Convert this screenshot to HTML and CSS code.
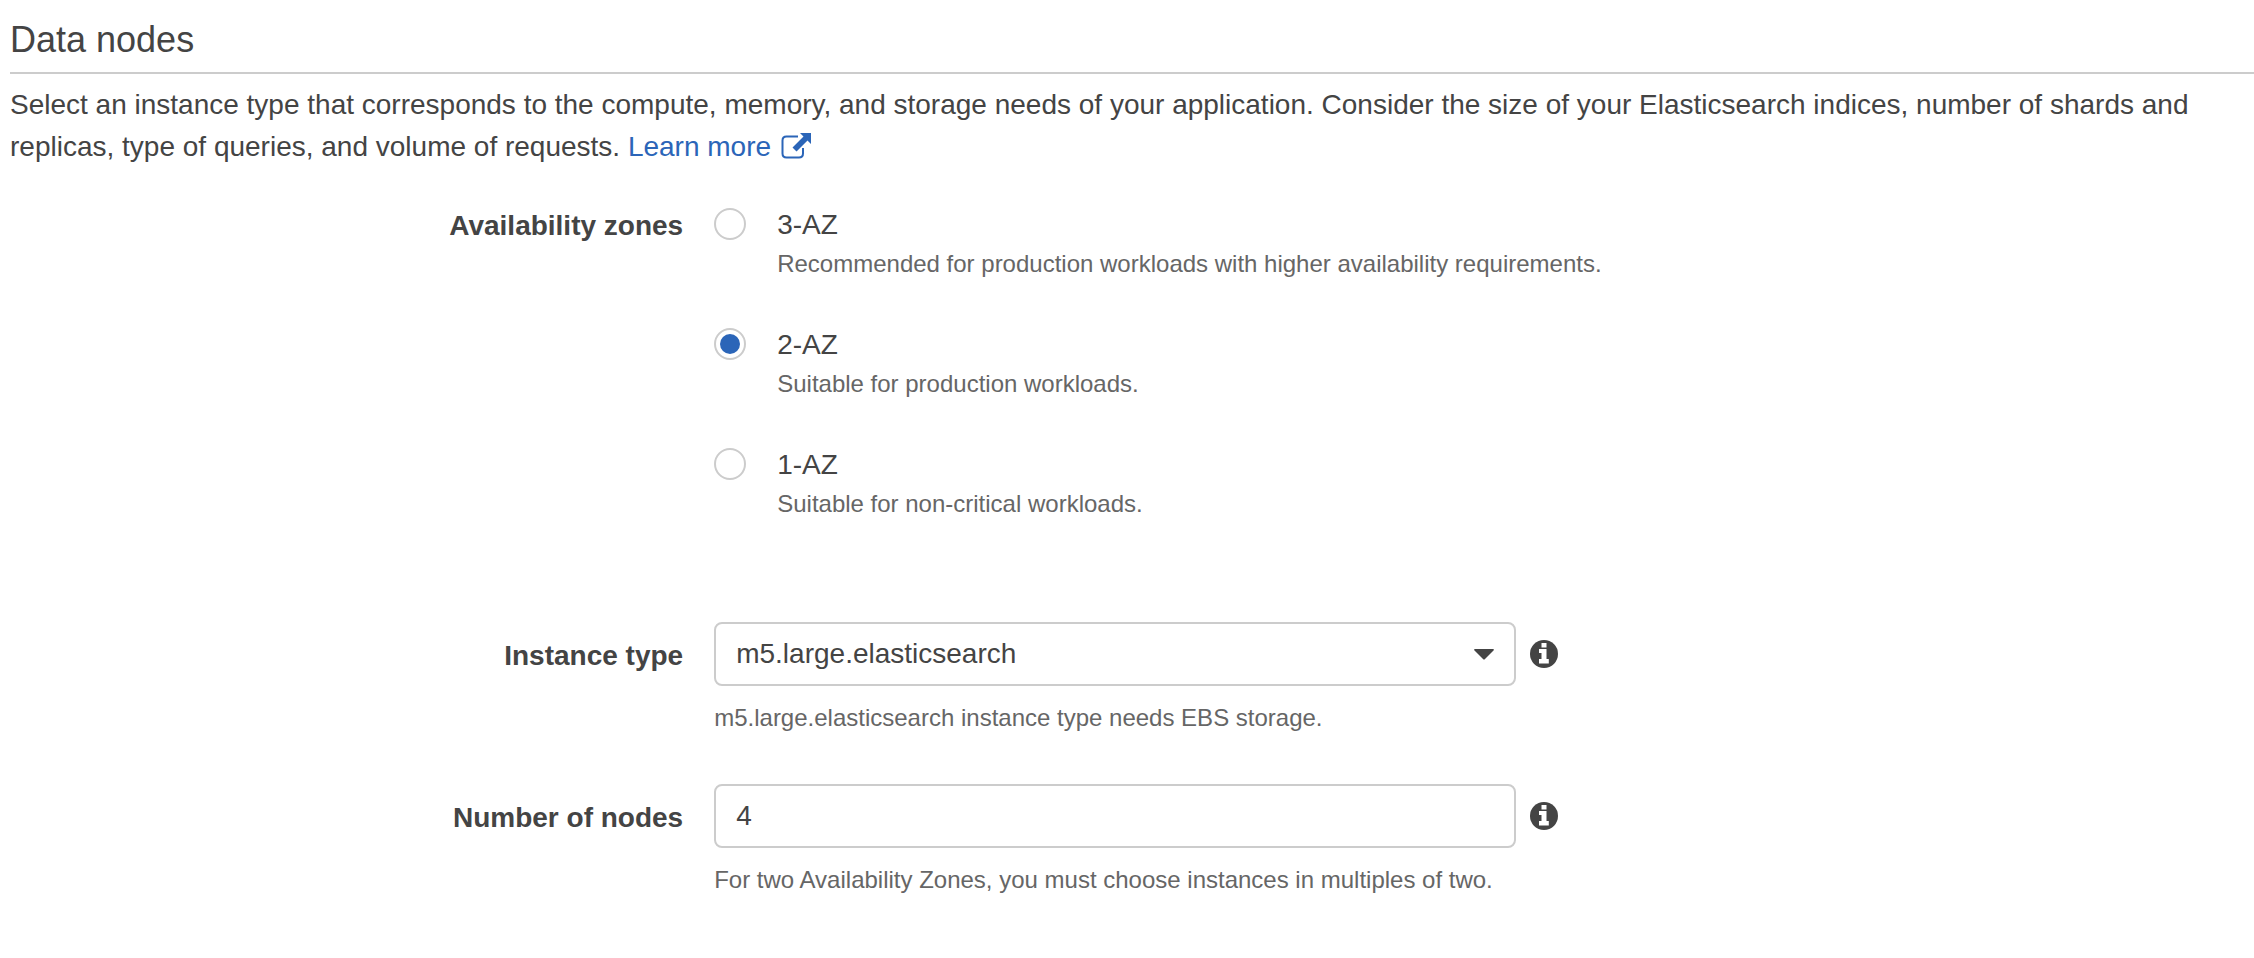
FILE: index.html
```html
<!DOCTYPE html>
<html lang="en">
<head>
<meta charset="utf-8">
<meta name="viewport" content="width=device-width, initial-scale=1">
<title>Data nodes</title>
<link rel="stylesheet" href="styles.css">
</head>
<body>
<main class="panel">
  <h2 class="panel-title">Data nodes</h2>
  <p class="intro">Select an instance type that corresponds to the compute, memory, and storage needs of your application. Consider the size of your Elasticsearch indices, number of shards and replicas, type of queries, and volume of requests. <a class="link" href="#">Learn more <svg class="external-icon" viewBox="0 0 30 26" aria-hidden="true"><path d="M17 3.500H5.500Q1.500 3.500 1.500 7.500V20.500Q1.500 24.500 5.500 24.500H18Q22 24.500 22 20.500V15" fill="none" stroke="currentColor" stroke-width="2"/><path d="M19 0H30V11L26.500 7.500L15.500 18.500L11.500 14.500L22.500 3.500Z" fill="currentColor"/></svg></a></p>

  <form class="form">
    <div class="row" role="radiogroup" aria-labelledby="zones-label">
      <span class="row-label" id="zones-label">Availability zones</span>
      <div class="options">
        <div class="option">
          <input class="radio" type="radio" name="zones" id="az3" aria-describedby="az3-help">
          <div class="option-text">
            <label class="option-name" for="az3">3-AZ</label>
            <p class="help" id="az3-help">Recommended for production workloads with higher availability requirements.</p>
          </div>
        </div>
        <div class="option">
          <input class="radio" type="radio" name="zones" id="az2" aria-describedby="az2-help" checked>
          <div class="option-text">
            <label class="option-name" for="az2">2-AZ</label>
            <p class="help" id="az2-help">Suitable for production workloads.</p>
          </div>
        </div>
        <div class="option">
          <input class="radio" type="radio" name="zones" id="az1" aria-describedby="az1-help">
          <div class="option-text">
            <label class="option-name" for="az1">1-AZ</label>
            <p class="help" id="az1-help">Suitable for non-critical workloads.</p>
          </div>
        </div>
      </div>
    </div>

    <div class="fields">
      <div class="row">
        <label class="row-label field-label" for="instance-type">Instance type</label>
        <div class="field">
          <div class="control-line">
            <div class="select-wrap">
              <select class="control select" id="instance-type">
                <option>m5.large.elasticsearch</option>
              </select>
              <svg class="caret" viewBox="0 0 20 12" aria-hidden="true"><path d="M1 1H19Q20.500 1.200 19.500 2.500L11 11Q10 12 9 11L.5 2.500Q-.5 1.200 1 1Z" fill="currentColor"/></svg>
            </div>
            <button class="info" type="button" aria-label="About instance type"><svg class="info-icon" viewBox="0 0 28 28" aria-hidden="true"><circle cx="14" cy="14" r="14" fill="currentColor"/><path d="M11.500 3H16.500V7.500H11.500ZM9 9H16.500V19H18.800V23.500H9V19H11.500V13H9Z" fill="#fff"/></svg></button>
          </div>
          <p class="help">m5.large.elasticsearch instance type needs EBS storage.</p>
        </div>
      </div>

      <div class="row">
        <label class="row-label field-label" for="node-count">Number of nodes</label>
        <div class="field">
          <div class="control-line">
            <input class="control" id="node-count" type="text" inputmode="numeric" value="4">
            <button class="info" type="button" aria-label="About number of nodes"><svg class="info-icon" viewBox="0 0 28 28" aria-hidden="true"><circle cx="14" cy="14" r="14" fill="currentColor"/><path d="M11.500 3H16.500V7.500H11.500ZM9 9H16.500V19H18.800V23.500H9V19H11.500V13H9Z" fill="#fff"/></svg></button>
          </div>
          <p class="help">For two Availability Zones, you must choose instances in multiples of two.</p>
        </div>
      </div>
    </div>
  </form>
</main>
</body>
</html>
```

FILE: styles.css
```css
* {
  box-sizing: border-box;
}

body {
  margin: 0;
  background: #fff;
  color: #444;
  font-family: "Helvetica Neue", "Liberation Sans", Arial, sans-serif;
  font-size: 28px;
  line-height: 42px;
}

p {
  margin: 0;
}

.panel {
  padding: 18px 0 18px 10px;
}

.panel-title {
  margin: 0;
  padding-bottom: 10px;
  border-bottom: 2px solid #ccc;
  font-size: 36px;
  font-weight: 400;
  line-height: 44px;
}

.intro {
  padding: 10px 32px 0 0;
}

.link {
  color: #2b65b8;
  text-decoration: none;
}

.external-icon {
  width: 30px;
  height: 26px;
  margin-left: 2px;
  vertical-align: -3px;
}

.form {
  display: flex;
  flex-direction: column;
  gap: 100px;
  margin-top: 36px;
}

.fields {
  display: flex;
  flex-direction: column;
  gap: 48px;
}

.row {
  display: grid;
  grid-template-columns: 30% 1fr;
  column-gap: 31px;
}

.row-label {
  padding-top: 1px;
  font-weight: 700;
  text-align: right;
}

.field-label {
  padding-top: 13px;
}

.options {
  display: flex;
  flex-direction: column;
  gap: 42px;
}

.option {
  display: flex;
  gap: 31px;
}

.radio {
  appearance: none;
  flex: none;
  width: 32px;
  height: 32px;
  margin: 4px 0 0;
  padding: 4px;
  border: 2px solid #ccc;
  border-radius: 50%;
  background: #fff;
}

.radio:checked::before {
  content: "";
  display: block;
  height: 100%;
  border-radius: 50%;
  background: #2b65b8;
}

.option-name {
  display: block;
}

.help {
  color: #666;
  font-size: 24px;
  line-height: 36px;
}

.field {
  display: flex;
  flex-direction: column;
  gap: 14px;
}

.control-line {
  display: flex;
  align-items: center;
  gap: 14px;
}

.select-wrap {
  position: relative;
  display: flex;
  flex: 0 1 802px;
}

.control {
  appearance: none;
  flex: 0 1 802px;
  min-width: 0;
  height: 64px;
  padding: 0 20px;
  border: 2px solid #ccc;
  border-radius: 8px;
  background: #fff;
  color: inherit;
  font: inherit;
}

.caret {
  position: absolute;
  top: 26px;
  right: 22px;
  width: 20px;
  height: 12px;
  pointer-events: none;
}

.info {
  display: flex;
  padding: 0;
  border: 0;
  background: none;
  color: #444;
}

.info-icon {
  width: 28px;
  height: 28px;
}
```
